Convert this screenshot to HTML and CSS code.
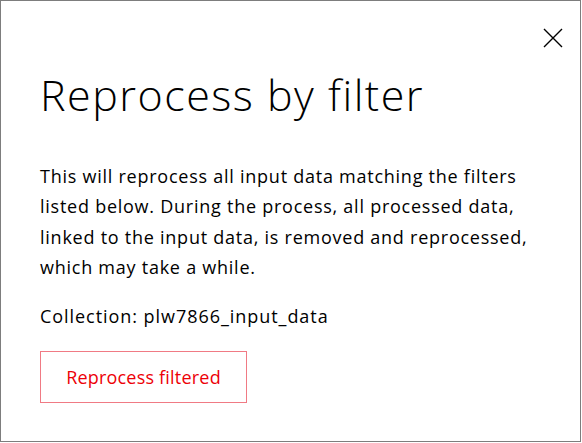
FILE: index.html
```html
<!DOCTYPE html>
<html>
<head>
<meta charset="utf-8">
<link rel="stylesheet" href="styles.css">
</head>
<body>
<div class="dialog">
  <button class="close" aria-label="Close">
    <svg width="20" height="20" viewBox="0 0 20 20"><path d="M1 1 L19 19 M19 1 L1 19" stroke="#000" stroke-width="1.4" fill="none"/></svg>
  </button>
  <h1 class="title">Reprocess by filter</h1>
  <p class="text">This will reprocess all input data matching the filters listed below. During the process, all processed data, linked to the input data, is removed and reprocessed, which may take a while.</p>
  <p class="collection">Collection: plw7866_input_data</p>
  <div class="actions"><button class="btn">Reprocess filtered</button></div>
</div>
</body>
</html>
```
FILE: styles.css
```css
html, body { margin: 0; padding: 0; background: #fff; }
body { font-family: "Open Sans", "Noto Sans", sans-serif; color: #000; }
.dialog {
  position: relative;
  box-sizing: border-box;
  width: 581px;
  height: 442px;
  border: 1px solid #7d7d7d;
  padding: 62px 40px 0 39px;
  display: flex;
  flex-direction: column;
  align-items: flex-start;
}
.close {
  position: absolute;
  top: 27px;
  right: 17px;
  width: 20px;
  height: 20px;
  padding: 0;
  border: 0;
  background: none;
  display: block;
}
.close svg { display: block; }
.title {
  margin: 0;
  font-weight: 300;
  font-size: 43px;
  line-height: 64px;
  letter-spacing: 1.5px;
}
.text {
  margin: 34px 0 0;
  max-width: 500px;
  font-size: 18px;
  line-height: 30.3px;
  letter-spacing: 0.75px;
}
.collection {
  margin: 19px 0 0;
  font-size: 18px;
  line-height: 30px;
  letter-spacing: 0.95px;
}
.actions { margin-top: 20px; }
.btn {
  box-sizing: border-box;
  width: 207px;
  height: 52px;
  border: 1px solid #f07a84;
  background: #fff;
  color: #ed0007;
  font-family: inherit;
  font-size: 18px;
  letter-spacing: 0.2px;
  padding: 0;
}
```
